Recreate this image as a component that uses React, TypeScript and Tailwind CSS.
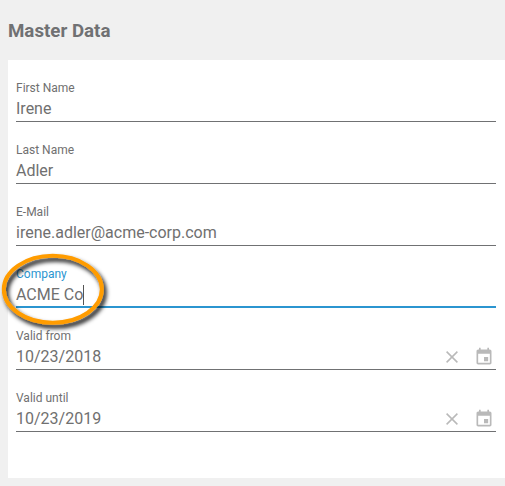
import React from "react";

type Field = { label: string; value: string; date?: boolean; active?: boolean };

const fields: Field[] = [
  { label: "First Name", value: "Irene" },
  { label: "Last Name", value: "Adler" },
  { label: "E-Mail", value: "irene.adler@acme-corp.com" },
  { label: "Company", value: "ACME Co", active: true },
  { label: "Valid from", value: "10/23/2018", date: true },
  { label: "Valid until", value: "10/23/2019", date: true },
];

function ClearIcon() {
  return (
    <svg className="h-3 w-3" viewBox="0 0 12 12" fill="none" stroke="#b9b9b9" strokeWidth="1.5">
      <path d="M.6.6l10.8 10.8M11.4.6L.6 11.4" />
    </svg>
  );
}

function CalendarIcon() {
  return (
    <svg className="h-5 w-5" viewBox="0 0 24 24" fill="#b9b9b9">
      <path d="M17 12h-5v5h5v-5zM16 1v2H8V1H6v2H5c-1.11 0-1.99.9-1.99 2L3 19c0 1.1.89 2 2 2h14c1.1 0 2-.9 2-2V5c0-1.1-.9-2-2-2h-1V1h-2zm3 18H5V8h14v11z" />
    </svg>
  );
}

// Orange marker ring drawn around the focused field
function Highlight() {
  return (
    <svg className="pointer-events-none absolute -left-4 -top-6 h-[100px] w-[120px]" viewBox="0 0 120 100">
      <defs>
        <filter id="ring-shadow" x="-20%" y="-20%" width="140%" height="150%">
          <feDropShadow dx="2.5" dy="3.5" stdDeviation="2" floodColor="#000" floodOpacity="1" />
        </filter>
      </defs>
      <ellipse cx="52.8" cy="46.3" rx="49" ry="33.5" fill="none" stroke="#ff9c00" strokeWidth="4" filter="url(#ring-shadow)" />
    </svg>
  );
}

function FormField({ label, value, date, active }: Field) {
  return (
    <div className="relative h-[62px]">
      <div
        className={`flex h-[41px] flex-col border-b ${
          active ? "border-b-2 border-[#2b95d0]" : "border-[#707173]"
        }`}
      >
        <label className={`h-[14px] text-xs leading-[14px] ${active ? "text-[#2b95d0]" : "text-[#707070]"}`}>
          {label}
        </label>
        <div className="flex h-[26px] shrink-0 items-center justify-between">
          <span className="flex items-center pt-0.5 text-base leading-[26px] text-[#707070]">
            {value}
            {active && <span className="h-5 w-px bg-[#555]" />}
          </span>
          {date && (
            <span className="flex items-center gap-4 pr-0.5 pt-0.5">
              <ClearIcon />
              <CalendarIcon />
            </span>
          )}
        </div>
      </div>
      {active && <Highlight />}
    </div>
  );
}

export default function App() {
  return (
    <main className="flex h-[486px] w-[505px] flex-col overflow-hidden bg-[#f0f0f0] pl-2 font-[Roboto,sans-serif]">
      <h1 className="flex h-[60px] shrink-0 items-center pt-0.5 text-[18.72px] font-bold text-[#707173]">Master Data</h1>
      <section className="h-[418px] bg-white pl-2 pr-[9px] pt-[21px]">
        {fields.map((field) => (
          <FormField key={field.label} {...field} />
        ))}
      </section>
    </main>
  );
}
